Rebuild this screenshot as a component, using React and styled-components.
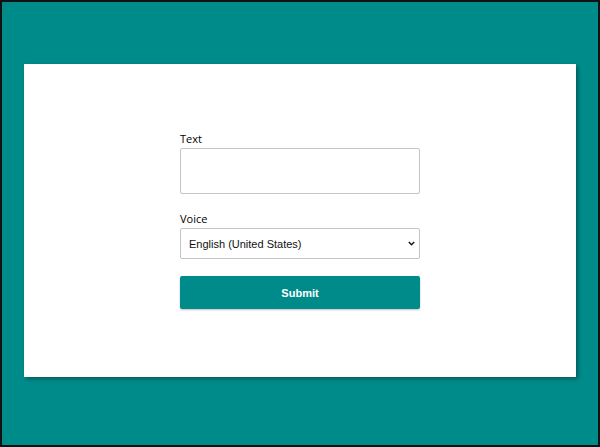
import React, { useState } from 'react';
import styled, { createGlobalStyle } from 'styled-components';

const GlobalStyle = createGlobalStyle`
  html, body {
    margin: 0;
    padding: 0;
  }
  * {
    box-sizing: border-box;
  }
`;

const Page = styled.div`
  width: 600px;
  height: 447px;
  border: 2px solid #111;
  background-color: #008b8b;
  padding: 62px 22px 68px;
`;

const Card = styled.div`
  height: 313px;
  background-color: #fff;
  box-shadow: 2px 2px 4px rgba(0, 0, 0, 0.35);
  display: flex;
  justify-content: center;
  padding-top: 67px;
`;

const Form = styled.form`
  width: 240px;
  display: flex;
  flex-direction: column;
`;

const Label = styled.label`
  display: block;
  font-family: 'Open Sans', sans-serif;
  font-size: 11px;
  line-height: 15px;
  color: #000;
  margin-bottom: 2px;
`;

const TextArea = styled.textarea`
  display: block;
  width: 100%;
  height: 46px;
  border: 1px solid #c4c4c4;
  border-radius: 2px;
  resize: none;
  padding: 6px 8px;
  font-family: 'Liberation Sans', Arial, sans-serif;
  font-size: 11px;
  margin: 0 0 17px;
  outline: none;
`;

const SelectWrap = styled.div`
  position: relative;
  margin: 0 0 17px;
`;

const Select = styled.select`
  display: block;
  width: 100%;
  height: 31px;
  border: 1px solid #c4c4c4;
  border-radius: 2px;
  padding: 0 20px 0 8px;
  background-color: #fff;
  color: #111;
  font-family: 'Liberation Sans', Arial, sans-serif;
  font-size: 11px;
  appearance: none;
  -webkit-appearance: none;
`;

const Chevron = styled.svg`
  position: absolute;
  right: 5px;
  top: 13px;
  width: 7px;
  height: 5px;
  pointer-events: none;
`;

const SubmitButton = styled.button`
  width: 100%;
  height: 33px;
  border: none;
  border-radius: 2px;
  background-color: #008b8b;
  color: #fff;
  font-family: 'Liberation Sans', Arial, sans-serif;
  font-size: 11px;
  font-weight: bold;
  box-shadow: 0 1px 2px rgba(0, 0, 0, 0.25);
  cursor: pointer;
`;

const App = () => {
  const [text, setText] = useState('');
  const [voice, setVoice] = useState('en-US');

  return (
    <>
      <GlobalStyle />
      <Page>
        <Card>
          <Form onSubmit={(e) => e.preventDefault()}>
            <Label htmlFor="text">Text</Label>
            <TextArea id="text" value={text} onChange={(e) => setText(e.target.value)} />
            <Label htmlFor="voice">Voice</Label>
            <SelectWrap>
              <Select id="voice" value={voice} onChange={(e) => setVoice(e.target.value)}>
                <option value="en-US">English (United States)</option>
                <option value="en-GB">English (United Kingdom)</option>
              </Select>
              <Chevron viewBox="0 0 7 5">
                <path d="M0.8 1 L3.5 3.7 L6.2 1" fill="none" stroke="#111" strokeWidth="1.4" />
              </Chevron>
            </SelectWrap>
            <SubmitButton type="submit">Submit</SubmitButton>
          </Form>
        </Card>
      </Page>
    </>
  );
};

export default App;
